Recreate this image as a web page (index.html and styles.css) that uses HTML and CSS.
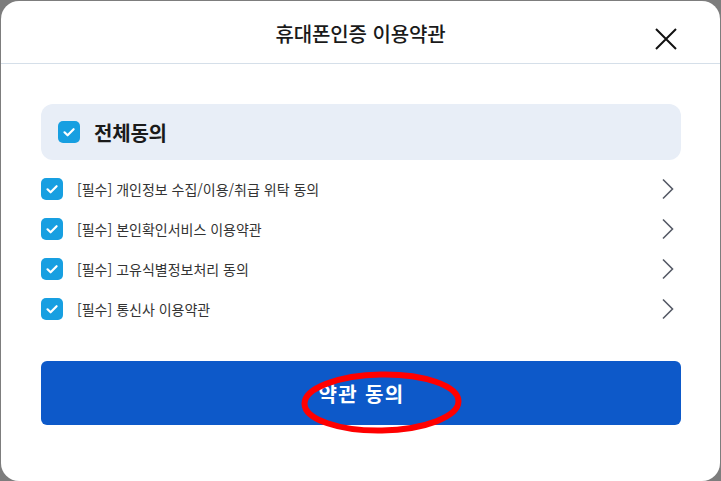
FILE: index.html
```html
<!DOCTYPE html>
<html lang="ko">
<head>
<meta charset="utf-8">
<title>휴대폰인증 이용약관</title>
<link rel="stylesheet" href="styles.css">
</head>
<body>
<div class="modal">
  <header class="modal-head">
    <h1 class="title">휴대폰인증 이용약관</h1>
    <button class="close" aria-label="닫기">
      <svg width="24" height="24" viewBox="0 0 24 24"><path d="M2 2 L22 22 M22 2 L2 22" stroke="#111" stroke-width="2" fill="none"/></svg>
    </button>
  </header>
  <div class="modal-body">
    <div class="all-agree">
      <span class="cb"><svg width="22" height="22" viewBox="0 0 22 22"><path d="M6.5 11.3 L9.6 14.3 L15.6 8.2" stroke="#fff" stroke-width="2.2" fill="none" stroke-linecap="round" stroke-linejoin="round"/></svg></span>
      <span class="all-label">전체동의</span>
    </div>
    <ul class="terms">
      <li class="term">
        <span class="cb"><svg width="22" height="22" viewBox="0 0 22 22"><path d="M6.5 11.3 L9.6 14.3 L15.6 8.2" stroke="#fff" stroke-width="2.2" fill="none" stroke-linecap="round" stroke-linejoin="round"/></svg></span>
        <span class="term-label">[필수] 개인정보 수집/이용/취급 위탁 동의</span>
        <svg class="chev" width="14" height="22" viewBox="0 0 14 22"><path d="M2 1.5 L11.5 11 L2 20.5" stroke="#555a66" stroke-width="1.6" fill="none"/></svg>
      </li>
      <li class="term">
        <span class="cb"><svg width="22" height="22" viewBox="0 0 22 22"><path d="M6.5 11.3 L9.6 14.3 L15.6 8.2" stroke="#fff" stroke-width="2.2" fill="none" stroke-linecap="round" stroke-linejoin="round"/></svg></span>
        <span class="term-label">[필수] 본인확인서비스 이용약관</span>
        <svg class="chev" width="14" height="22" viewBox="0 0 14 22"><path d="M2 1.5 L11.5 11 L2 20.5" stroke="#555a66" stroke-width="1.6" fill="none"/></svg>
      </li>
      <li class="term">
        <span class="cb"><svg width="22" height="22" viewBox="0 0 22 22"><path d="M6.5 11.3 L9.6 14.3 L15.6 8.2" stroke="#fff" stroke-width="2.2" fill="none" stroke-linecap="round" stroke-linejoin="round"/></svg></span>
        <span class="term-label">[필수] 고유식별정보처리 동의</span>
        <svg class="chev" width="14" height="22" viewBox="0 0 14 22"><path d="M2 1.5 L11.5 11 L2 20.5" stroke="#555a66" stroke-width="1.6" fill="none"/></svg>
      </li>
      <li class="term">
        <span class="cb"><svg width="22" height="22" viewBox="0 0 22 22"><path d="M6.5 11.3 L9.6 14.3 L15.6 8.2" stroke="#fff" stroke-width="2.2" fill="none" stroke-linecap="round" stroke-linejoin="round"/></svg></span>
        <span class="term-label">[필수] 통신사 이용약관</span>
        <svg class="chev" width="14" height="22" viewBox="0 0 14 22"><path d="M2 1.5 L11.5 11 L2 20.5" stroke="#555a66" stroke-width="1.6" fill="none"/></svg>
      </li>
    </ul>
    <div class="btn-wrap">
      <button class="agree-btn">약관 동의</button>
      <svg class="mark" width="162" height="64" viewBox="0 0 162 64"><ellipse cx="80.5" cy="31.5" rx="77" ry="28" stroke="#ff0000" stroke-width="6" fill="none" transform="rotate(-1 80 32)"/></svg>
    </div>
  </div>
</div>
</body>
</html>
```

FILE: styles.css
```css
* { box-sizing: border-box; }
html, body { margin: 0; padding: 0; }
body {
  background: #7d7d7d;
  width: 721px;
  height: 481px;
  overflow: hidden;
  font-family: "Noto Sans CJK KR", "Noto Sans", sans-serif;
}
.modal {
  margin: 1px 1px 0 1px;
  width: 719px;
  height: 480px;
  background: #fff;
  border-radius: 18px;
  display: flex;
  flex-direction: column;
}
.modal-head {
  position: relative;
  height: 63px;
  border-bottom: 1px solid #d5dfe9;
  display: flex;
  align-items: center;
  justify-content: center;
}
.title {
  margin: 0;
  font-size: 20px;
  font-weight: 500;
  color: #1a1a1a;
  letter-spacing: -0.1px;
  padding-top: 2px;
}
.close {
  position: absolute;
  right: 42px;
  top: 26px;
  width: 24px;
  height: 24px;
  padding: 0;
  border: 0;
  background: none;
  display: flex;
}
.modal-body {
  padding: 40px 39px 0 40px;
  display: flex;
  flex-direction: column;
}
.all-agree {
  height: 56px;
  background: #e8eef7;
  border-radius: 12px;
  display: flex;
  align-items: center;
  padding-left: 17px;
  gap: 14px;
}
.cb {
  width: 22px;
  height: 22px;
  border-radius: 5px;
  background: #179fe1;
  display: flex;
  flex: none;
}
.all-label {
  font-size: 20px;
  font-weight: 700;
  color: #1a1a1a;
  letter-spacing: -0.2px;
}
.terms {
  list-style: none;
  margin: 9px 0 0 0;
  padding: 0;
}
.term {
  height: 40px;
  display: flex;
  align-items: center;
  gap: 14px;
}
.term-label {
  flex: 1;
  font-size: 14px;
  color: #333;
}
.chev {
  margin-right: 6px;
}
.btn-wrap {
  position: relative;
  margin-top: 32px;
}
.agree-btn {
  width: 100%;
  height: 64px;
  border: 0;
  border-radius: 6px;
  background: #0d59c9;
  color: #fff;
  font-family: inherit;
  font-size: 20px;
  font-weight: 700;
  letter-spacing: 1.4px;
  padding: 0 0 0 1px;
}
.mark {
  position: absolute;
  left: 260px;
  top: 10px;
}
```
